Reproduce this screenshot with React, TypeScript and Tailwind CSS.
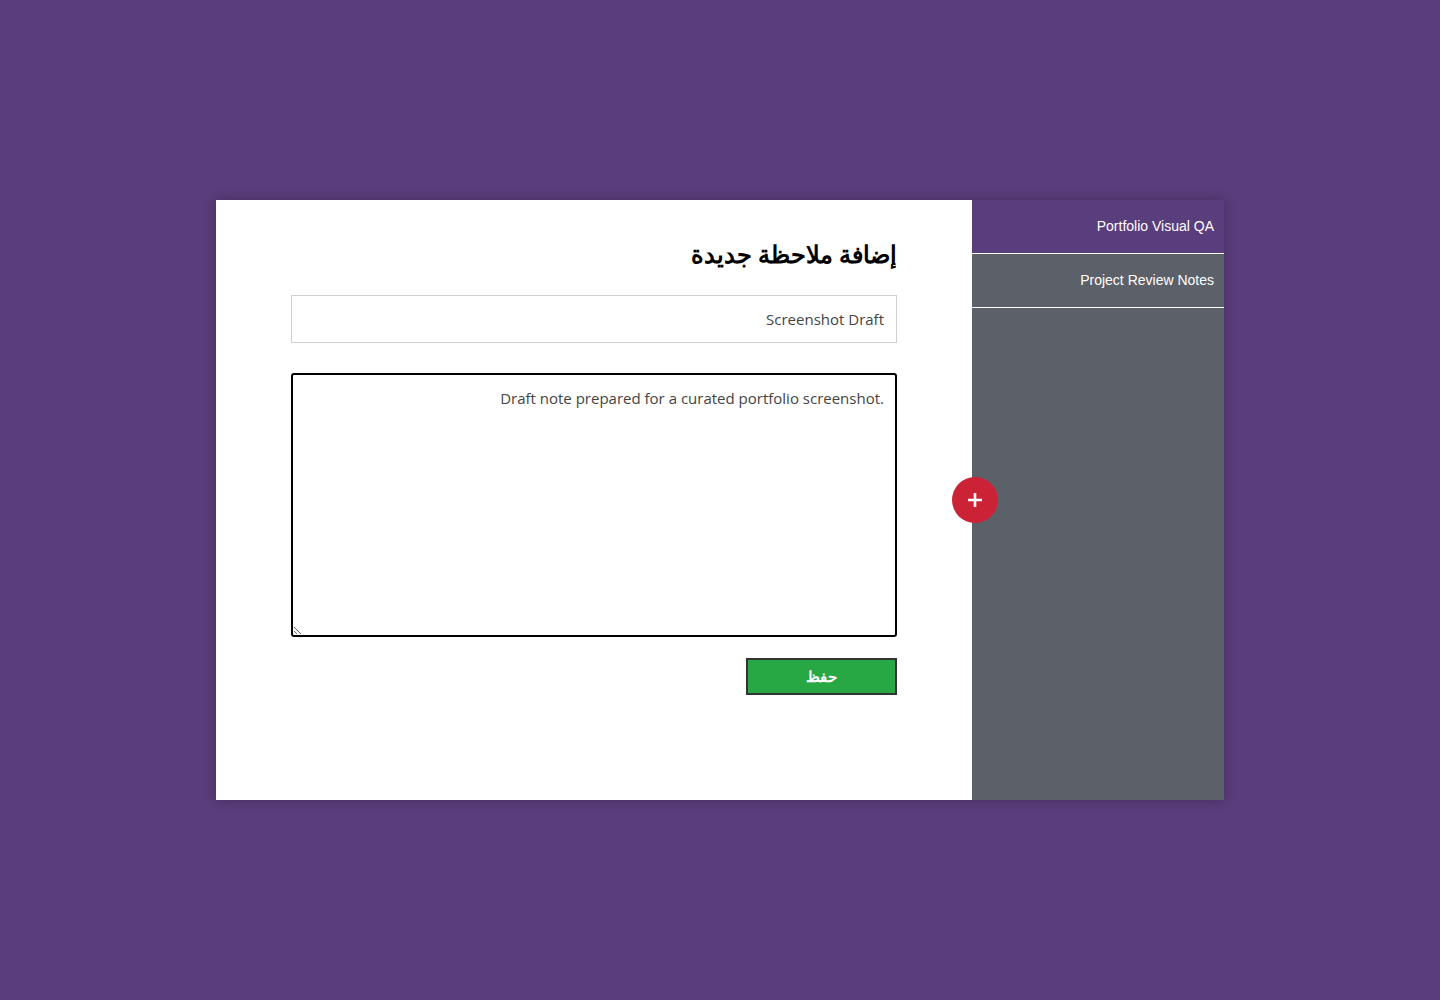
export default function App() {
  return (
    <div className="min-h-screen w-full bg-[#5a3d7c] flex items-center justify-center" style={{ fontFamily: '"Open Sans", "Noto Sans", sans-serif' }}>
      <div dir="rtl" className="relative flex h-[600px] w-[1008px] shadow-[0_0_12px_rgba(0,0,0,0.25)]">
        <div className="w-[252px] bg-[#5c6068] flex flex-col">
          <div className="h-[54px] bg-[#5a3d7c] border-b border-white flex items-center pr-[10px] text-white text-[14px]" style={{ fontFamily: '"Liberation Sans", "Noto Sans", sans-serif' }}>Portfolio Visual QA</div>
          <div className="h-[54px] border-b border-white flex items-center pr-[10px] text-white text-[14px]" style={{ fontFamily: '"Liberation Sans", "Noto Sans", sans-serif' }}>Project Review Notes</div>
        </div>
        <div className="w-[756px] bg-white px-[75px] pt-[36px] flex flex-col">
          <h1 className="text-[24px] font-bold text-black leading-[36px]" style={{ fontFamily: '"Noto Sans", sans-serif' }}>إضافة ملاحظة جديدة</h1>
          <input dir="rtl" defaultValue="Screenshot Draft" className="mt-[23px] h-[48px] w-full border border-[#d0d0d0] px-[12px] text-[15px] text-[#444] outline-none" />
          <textarea dir="rtl" defaultValue=".Draft note prepared for a curated portfolio screenshot" className="mt-[30px] h-[264px] w-full border-2 border-black rounded-[3px] px-[11px] py-[12px] text-[15px] text-[#444] outline-none resize" />
          <div className="mt-[21px] flex">
            <button className="h-[37px] w-[151px] bg-[#28a745] border-2 border-[#333] text-white text-[15px] font-bold" style={{ fontFamily: '"Noto Sans", sans-serif' }}>حفظ</button>
          </div>
        </div>
        <button className="absolute left-[736px] top-[277px] h-[46px] w-[46px] rounded-full bg-[#cc2236] text-white flex items-center justify-center">
          <svg width="16" height="16" viewBox="0 0 16 16"><path d="M8 1v14M1 8h14" stroke="white" strokeWidth="2.6" /></svg>
        </button>
      </div>
    </div>
  );
}
